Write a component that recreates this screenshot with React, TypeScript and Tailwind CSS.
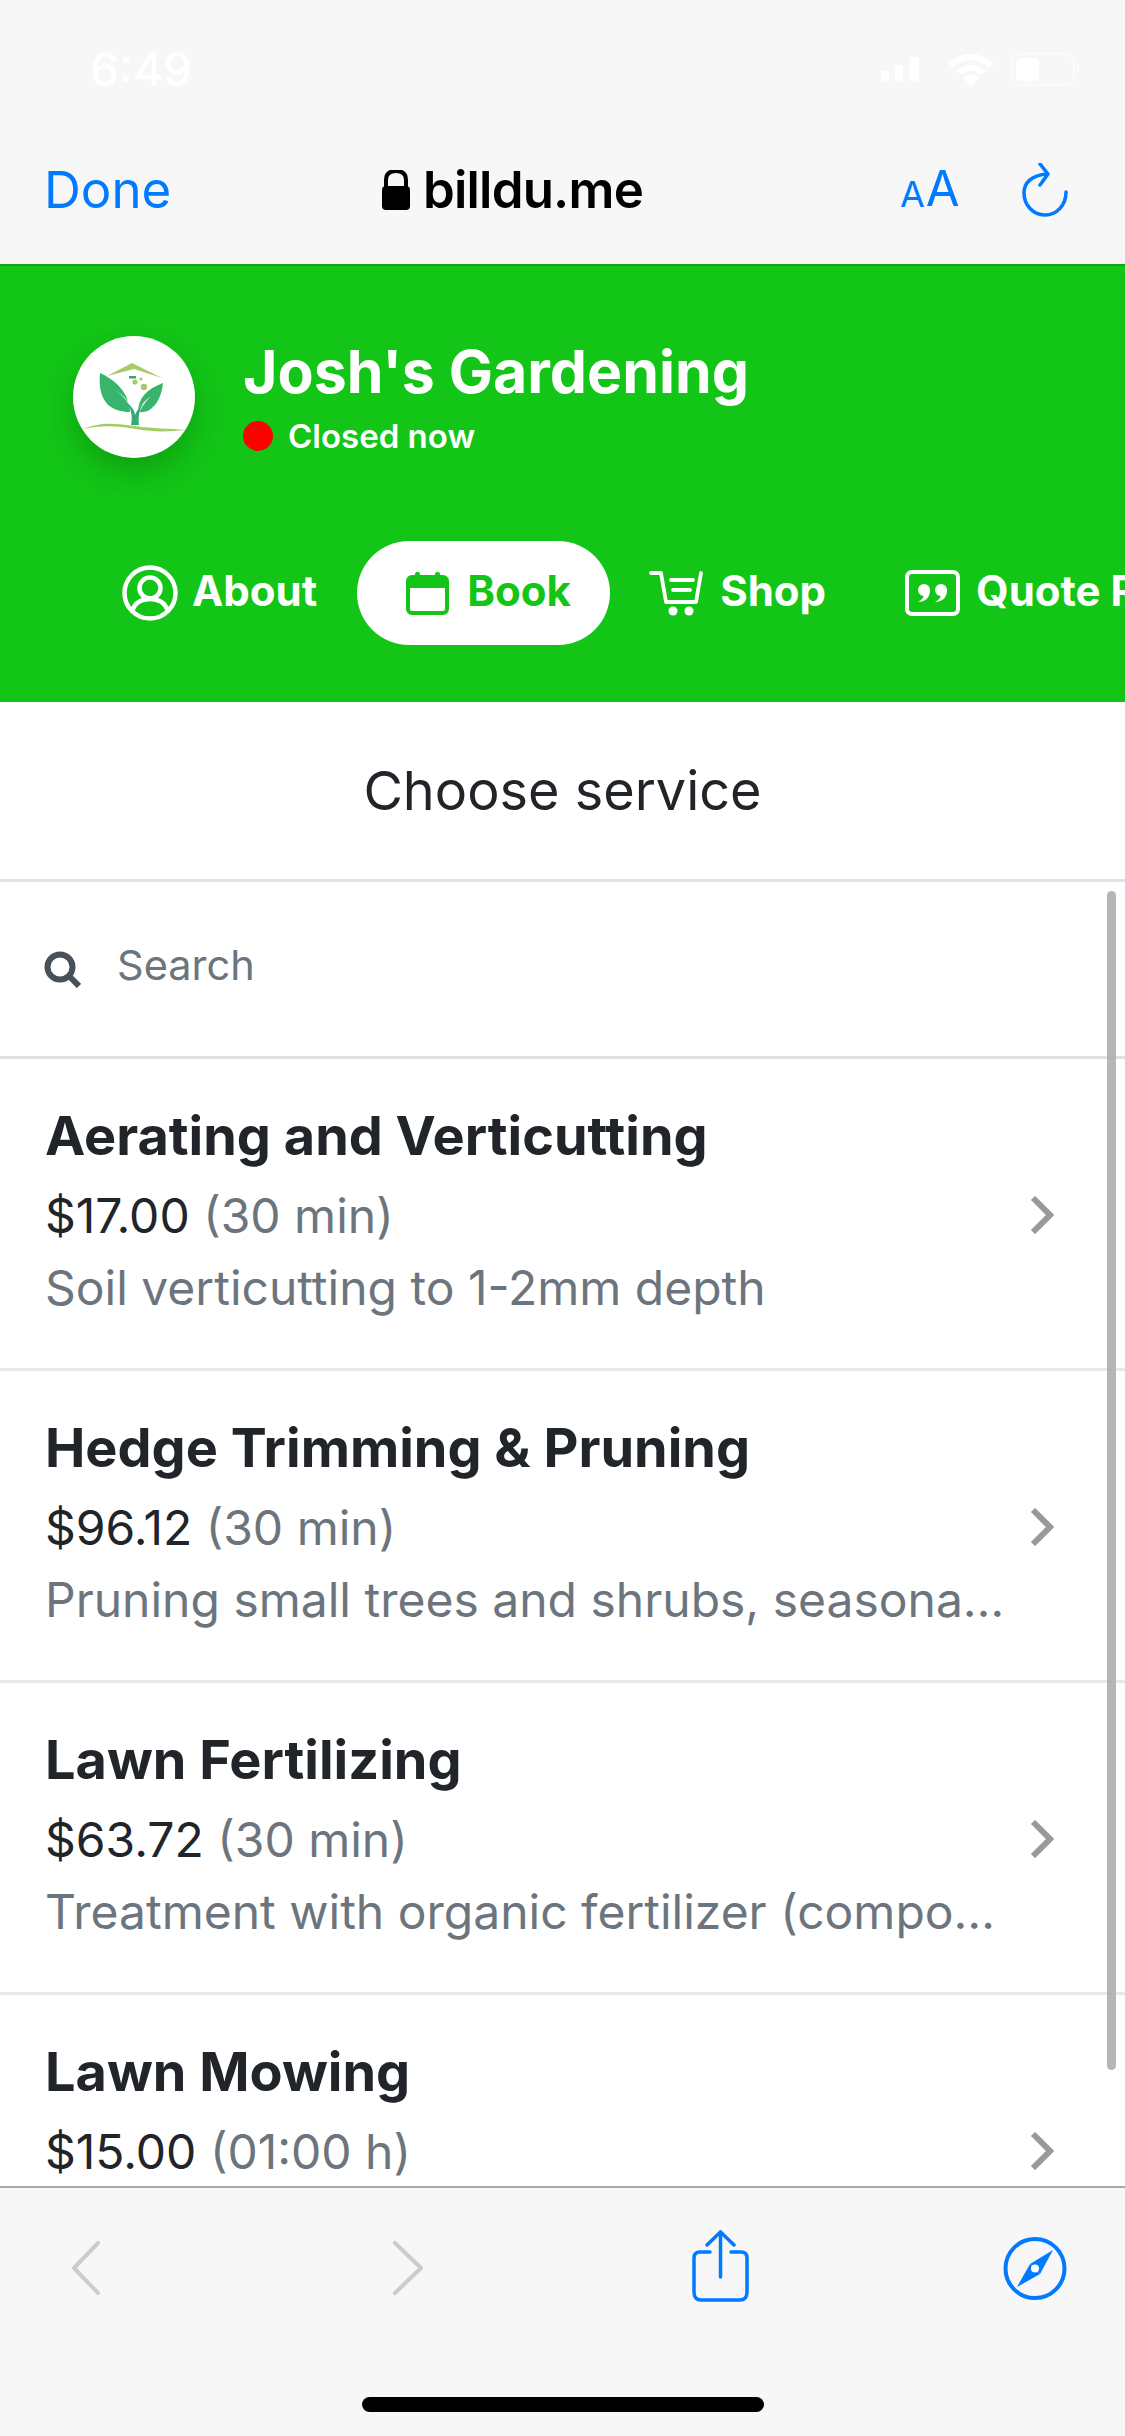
import React from "react";

const services = [
  { name: "Aerating and Verticutting", price: "$17.00", time: "(30 min)", desc: "Soil verticutting to 1-2mm depth" },
  { name: "Hedge Trimming & Pruning", price: "$96.12", time: "(30 min)", desc: "Pruning small trees and shrubs, seasonal cleanup" },
  { name: "Lawn Fertilizing", price: "$63.72", time: "(30 min)", desc: "Treatment with organic fertilizer (compost and more)" },
  { name: "Lawn Mowing", price: "$15.00", time: "(01:00 h)", desc: "Mowing and edging of the lawn" },
];

const StatusBar = () => (
  <div className="flex items-center justify-between h-[34px] mt-[52px] pl-[90px] pr-[46px] text-white">
    <span className="text-[46px] leading-[34px] font-medium">6:49</span>
    <div className="flex items-center">
      <svg width="39" height="25" viewBox="0 0 39 25" fill="white" className="mr-[28px]">
        <rect x="0" y="14" width="8" height="11" rx="2" />
        <rect x="14" y="8" width="8" height="17" rx="2" />
        <rect x="29" y="0" width="9" height="25" rx="2" />
      </svg>
      <svg width="46" height="33" viewBox="0 0 46 33" fill="none" stroke="white" strokeWidth="6" className="mr-[17px]">
        <path d="M3 13 C14 1 32 1 43 13" />
        <path d="M11 20 C18 13 28 13 35 20" />
        <path d="M23 33 L15 25 C19 21 27 21 31 25 Z" fill="white" stroke="none" />
      </svg>
      <svg width="68" height="33" viewBox="0 0 68 33" fill="none">
        <rect x="1" y="1" width="62" height="31" rx="9" stroke="white" strokeOpacity="0.5" strokeWidth="2" />
        <rect x="5" y="5" width="23" height="23" rx="5" fill="white" />
        <rect x="65" y="12" width="3" height="9" rx="1.5" fill="white" fillOpacity="0.5" />
      </svg>
    </div>
  </div>
);

const BrowserBar = () => (
  <div className="flex items-center h-[60px] mt-[74px] pl-[44px] pr-[57px]">
    <span className="text-[51px] leading-[60px] text-[#007aff] w-[338px]">Done</span>
    <svg width="28" height="40" viewBox="0 0 28 40" fill="black" className="mr-[13px]">
      <path d="M4 17 V10 C4 3 9 1 14 1 C19 1 24 3 24 10 V17" fill="none" stroke="black" strokeWidth="4" />
      <rect x="0" y="16" width="28" height="24" rx="4" />
    </svg>
    <span className="text-[51px] leading-[60px] font-semibold text-black tracking-[-0.8px] w-[477px]">billdu.me</span>
    <div className="flex items-end gap-[1px] h-[38px] text-[#007aff]">
      <span className="text-[36px] leading-[30px]">A</span>
      <span className="text-[49px] leading-[40px]">A</span>
    </div>
    <svg width="46" height="54" viewBox="0 0 46 54" fill="none" stroke="#007aff" strokeWidth="3.5" strokeLinecap="round" strokeLinejoin="round" className="ml-auto">
      <path d="M44 29 C44 42 35 52 23 52 C11 52 2 42 2 30 C2 20 9 13 24 11" />
      <path d="M18 1 L26 11 L18 22" />
    </svg>
  </div>
);

const Logo = () => (
  <div className="w-[122px] h-[122px] rounded-full bg-white shadow-[0_14px_30px_rgba(0,0,0,0.18)] shrink-0">
    <svg width="122" height="122" viewBox="0 0 122 122">
      <path d="M34 40 L59 27 L89 42 L61 33 Z" fill="#a9c96b" />
      <rect x="56" y="40" width="7" height="2.5" fill="#3f9f7a" />
      <circle cx="71" cy="51" r="3.2" fill="#a9c96b" />
      <circle cx="62" cy="46" r="2.6" fill="#a9c96b" />
      <circle cx="68" cy="43" r="1.6" fill="#a9c96b" />
      <path d="M27 37 C42 44 56 56 57 76 C40 76 24 68 27 37 Z" fill="#38b56c" />
      <path d="M90 47 C88 66 78 78 65 76 C65 62 74 53 90 47 Z" fill="#38b56c" />
      <path d="M42 54 C54 62 60 72 60 89 H64 C64 78 70 68 78 60 C70 66 66 72 62 77 C58 68 52 60 42 54 Z" fill="#fff" />
      <path d="M58 89 C60 80 58 72 53 66 C59 70 62 76 62 79 C64 74 67 70 71 67 C66 74 65 80 66 89 Z" fill="#35a977" />
      <path d="M10 93 C30 85 45 88 62 90 C80 93 95 92 113 94 C95 96 80 96 62 93 C45 90 30 89 10 93 Z" fill="#a3cd64" />
    </svg>
  </div>
);

const UserIcon = () => (
  <svg width="56" height="56" viewBox="0 0 56 56" fill="none" stroke="white" strokeWidth="4.5">
    <circle cx="28" cy="28" r="25.5" />
    <circle cx="28" cy="23" r="10.5" />
    <path d="M10 46 C13 37 20 34 28 34 C36 34 43 37 46 46" />
  </svg>
);

const CalendarIcon = () => (
  <svg width="43" height="43" viewBox="0 0 43 43" fill="none">
    <rect x="2" y="5" width="39" height="36" rx="4" stroke="#12c516" strokeWidth="4" />
    <rect x="2" y="5" width="39" height="11" fill="#12c516" />
    <rect x="9" y="0" width="5" height="9" rx="2" fill="#12c516" />
    <rect x="29" y="0" width="5" height="9" rx="2" fill="#12c516" />
  </svg>
);

const CartIcon = () => (
  <svg width="55" height="46" viewBox="0 0 55 46" fill="none" stroke="white" strokeWidth="3.8" strokeLinecap="round" strokeLinejoin="round">
    <path d="M2 3 H12 L17 32 H47 L52 3" />
    <path d="M22 10 H44" />
    <path d="M24 20 H41" />
    <circle cx="24" cy="41" r="4.5" fill="white" stroke="none" />
    <circle cx="40" cy="41" r="4.5" fill="white" stroke="none" />
  </svg>
);

const QuoteIcon = () => (
  <svg width="55" height="46" viewBox="0 0 55 46" fill="none">
    <rect x="2" y="2" width="51" height="42" rx="5" stroke="white" strokeWidth="4" />
    <circle cx="19" cy="20" r="6" fill="white" />
    <path d="M25 20 C25 28 20 32 13 32 C17 30 19 27 19 24 Z" fill="white" />
    <circle cx="36" cy="20" r="6" fill="white" />
    <path d="M42 20 C42 28 37 32 30 32 C34 30 36 27 36 24 Z" fill="white" />
  </svg>
);

const Header = () => (
  <div className="h-[438px] bg-[#12c516] border-t-2 border-[#0ea412] shrink-0">
    <div className="flex pl-[73px] pt-[70px] gap-[48px]">
      <Logo />
      <div className="flex flex-col">
        <span className="text-[59px] leading-[70px] mt-[1px] font-bold text-white whitespace-nowrap">Josh's Gardening</span>
        <div className="flex items-center gap-[15px] mt-[7px]">
          <span className="w-[30px] h-[30px] rounded-full bg-[#ff0000]" />
          <span className="text-[33px] leading-[44px] font-semibold text-white">Closed now</span>
        </div>
      </div>
    </div>
    <nav className="flex items-center mt-[83px] pl-[82px] h-[104px] overflow-hidden text-white text-[42px] font-bold whitespace-nowrap">
      <a className="flex items-center gap-[14px] px-[40px] shrink-0">
        <UserIcon />
        <span className="pb-[6px]">About</span>
      </a>
      <a className="flex items-center gap-[18px] h-[104px] w-[253px] pl-[49px] rounded-full bg-white text-[#12c516] shrink-0">
        <CalendarIcon />
        <span className="pb-[6px]">Book</span>
      </a>
      <a className="flex items-center gap-[16px] px-[39px] shrink-0">
        <CartIcon />
        <span className="pb-[6px]">Shop</span>
      </a>
      <a className="flex items-center gap-[16px] px-[40px] shrink-0">
        <QuoteIcon />
        <span className="pb-[6px]">Quote Request</span>
      </a>
    </nav>
  </div>
);

const ServiceRow = ({ s }: { s: (typeof services)[number] }) => (
  <div className="flex items-center h-[312px] pl-[45px] border-b-[3px] border-[#e8e8e8] shrink-0">
    <div className="w-[961px] min-w-0 pb-[4px]">
      <div className="text-[54px] leading-[72px] mb-[8px] font-bold text-[#212529] truncate">{s.name}</div>
      <div className="text-[48px] leading-[72px] text-[#212529]">
        {s.price} <span className="text-[#6c757d]">{s.time}</span>
      </div>
      <div className="text-[48px] leading-[72px] text-[#6c757d] truncate">{s.desc}</div>
    </div>
    <svg width="24" height="38" viewBox="0 0 24 38" fill="none" stroke="#999" strokeWidth="6" className="ml-[24px] mt-[2px]">
      <path d="M3 2 L20 19 L3 36" />
    </svg>
  </div>
);

const ToolbarIcons = () => (
  <div className="flex items-center h-[72px] mt-[42px] pl-[72px]">
    <svg width="28" height="54" viewBox="0 0 28 54" fill="none" stroke="#ccc" strokeWidth="4" strokeLinecap="round" strokeLinejoin="round" className="mt-[4px]">
      <path d="M26 2 L2 27 L26 52" />
    </svg>
    <svg width="30" height="54" viewBox="0 0 30 54" fill="none" stroke="#ccc" strokeWidth="4" strokeLinecap="round" strokeLinejoin="round" className="ml-[293px] mt-[4px]">
      <path d="M2 2 L28 27 L2 52" />
    </svg>
    <svg width="57" height="72" viewBox="0 0 57 72" fill="none" stroke="#007aff" strokeWidth="3.5" strokeLinecap="round" strokeLinejoin="round" className="ml-[269px]">
      <path d="M18 22 H8 C4 22 2 24 2 28 V62 C2 67 4 70 9 70 H48 C53 70 55 67 55 62 V28 C55 24 53 22 49 22 H39" />
      <path d="M28.5 47 V2" />
      <path d="M15 15 L28.5 2 L42 15" />
    </svg>
    <svg width="64" height="65" viewBox="0 0 64 65" className="ml-[254px] mt-[5px]">
      <circle cx="32" cy="32.5" r="29.5" fill="none" stroke="#007aff" strokeWidth="4" />
      <path d="M50 14 L27 28 L37 38 Z" fill="#007aff" />
      <path d="M14 51 L27 28 L37 38 Z" fill="#007aff" />
      <circle cx="32" cy="32.5" r="4" fill="white" />
    </svg>
  </div>
);

export default function App() {
  return (
    <div className="flex flex-col w-[1125px] h-[2436px] overflow-hidden bg-white" style={{ fontFamily: "Inter, sans-serif" }}>
      <div className="h-[264px] bg-[#f7f7f7] shrink-0 flex flex-col">
        <StatusBar />
        <BrowserBar />
      </div>
      <Header />
      <div className="relative flex-1 flex flex-col min-h-0 overflow-hidden">
        <div className="flex items-center justify-center h-[180px] border-b-[3px] border-[#dee2e6] shrink-0 text-[54px] text-[#212529]">
          Choose service
        </div>
        <div className="flex items-center h-[177px] pl-[44px] gap-[36px] border-b-[3px] border-[#e0e0e0] shrink-0">
          <svg width="37" height="37" viewBox="0 0 37 37" fill="none" stroke="#495057" strokeWidth="6">
            <circle cx="16" cy="16" r="12.5" />
            <path d="M25 25 L35 35" />
          </svg>
          <span className="text-[41.5px] text-[#6c757d] -mt-[8px]">Search</span>
        </div>
        {services.map((s) => (
          <ServiceRow key={s.name} s={s} />
        ))}
        <div className="absolute right-[9px] top-[189px] w-[9px] h-[1179px] rounded-full bg-[#aeaeae]/90" />
      </div>
      <div className="h-[250px] bg-[#f7f7f7] border-t-2 border-[#a8a8a8] shrink-0 flex flex-col">
        <ToolbarIcons />
        <div className="w-[402px] h-[15px] rounded-full bg-black self-center ml-[1px] mt-[95px]" />
      </div>
    </div>
  );
}
